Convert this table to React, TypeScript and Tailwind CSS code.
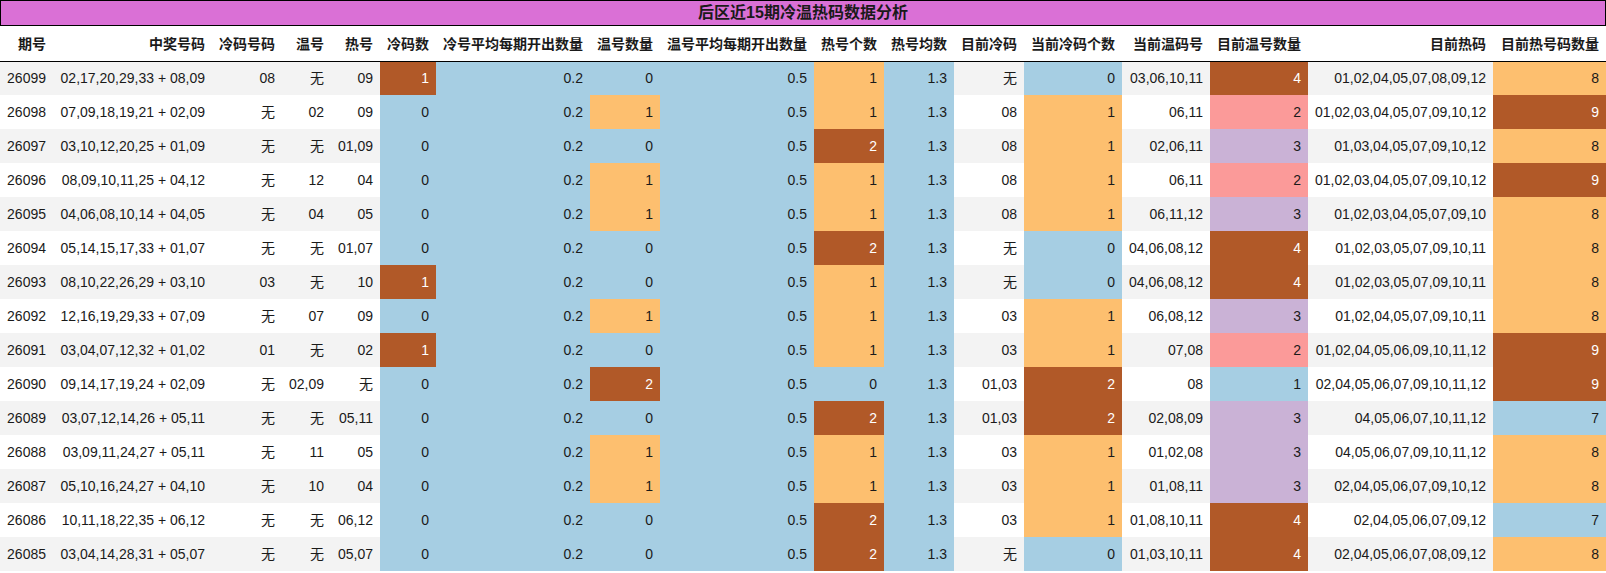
import React from 'react';

const BLUE = 'bg-[#a6cee3]';
const ORANGE = 'bg-[#fdbf6f]';
const BROWN = 'bg-[#b15928] text-white';
const PINK = 'bg-[#fb9a99]';
const LAV = 'bg-[#cab2d6]';

const scale3: Record<string, string> = { '0': BLUE, '1': ORANGE, '2': BROWN };
const coldScale: Record<string, string> = { '0': BLUE, '1': BROWN };
const warmNowScale: Record<string, string> = { '1': BLUE, '2': PINK, '3': LAV, '4': BROWN };
const hotNowScale: Record<string, string> = { '7': BLUE, '8': ORANGE, '9': BROWN };

const headers = [
  '期号', '中奖号码', '冷码号码', '温号', '热号', '冷码数', '冷号平均每期开出数量', '温号数量',
  '温号平均每期开出数量', '热号个数', '热号均数', '目前冷码', '当前冷码个数', '当前温码号',
  '目前温号数量', '目前热码', '目前热号码数量',
];

const widths = [
  'w-[53px]', 'w-[159px]', 'w-[70px]', 'w-[49px]', 'w-[49px]', 'w-[56px]', 'w-[154px]', 'w-[70px]',
  'w-[154px]', 'w-[70px]', 'w-[70px]', 'w-[70px]', 'w-[98px]', 'w-[88px]', 'w-[98px]', 'w-[185px]', 'w-[113px]',
];

// column index -> colour scale (others follow the row stripe)
const colScales: Record<number, Record<string, string> | string> = {
  5: coldScale,
  6: BLUE,
  7: scale3,
  8: BLUE,
  9: scale3,
  10: BLUE,
  12: scale3,
  14: warmNowScale,
  16: hotNowScale,
};

const rows: string[][] = [
  ['26099', '02,17,20,29,33 + 08,09', '08', '无', '09', '1', '0.2', '0', '0.5', '1', '1.3', '无', '0', '03,06,10,11', '4', '01,02,04,05,07,08,09,12', '8'],
  ['26098', '07,09,18,19,21 + 02,09', '无', '02', '09', '0', '0.2', '1', '0.5', '1', '1.3', '08', '1', '06,11', '2', '01,02,03,04,05,07,09,10,12', '9'],
  ['26097', '03,10,12,20,25 + 01,09', '无', '无', '01,09', '0', '0.2', '0', '0.5', '2', '1.3', '08', '1', '02,06,11', '3', '01,03,04,05,07,09,10,12', '8'],
  ['26096', '08,09,10,11,25 + 04,12', '无', '12', '04', '0', '0.2', '1', '0.5', '1', '1.3', '08', '1', '06,11', '2', '01,02,03,04,05,07,09,10,12', '9'],
  ['26095', '04,06,08,10,14 + 04,05', '无', '04', '05', '0', '0.2', '1', '0.5', '1', '1.3', '08', '1', '06,11,12', '3', '01,02,03,04,05,07,09,10', '8'],
  ['26094', '05,14,15,17,33 + 01,07', '无', '无', '01,07', '0', '0.2', '0', '0.5', '2', '1.3', '无', '0', '04,06,08,12', '4', '01,02,03,05,07,09,10,11', '8'],
  ['26093', '08,10,22,26,29 + 03,10', '03', '无', '10', '1', '0.2', '0', '0.5', '1', '1.3', '无', '0', '04,06,08,12', '4', '01,02,03,05,07,09,10,11', '8'],
  ['26092', '12,16,19,29,33 + 07,09', '无', '07', '09', '0', '0.2', '1', '0.5', '1', '1.3', '03', '1', '06,08,12', '3', '01,02,04,05,07,09,10,11', '8'],
  ['26091', '03,04,07,12,32 + 01,02', '01', '无', '02', '1', '0.2', '0', '0.5', '1', '1.3', '03', '1', '07,08', '2', '01,02,04,05,06,09,10,11,12', '9'],
  ['26090', '09,14,17,19,24 + 02,09', '无', '02,09', '无', '0', '0.2', '2', '0.5', '0', '1.3', '01,03', '2', '08', '1', '02,04,05,06,07,09,10,11,12', '9'],
  ['26089', '03,07,12,14,26 + 05,11', '无', '无', '05,11', '0', '0.2', '0', '0.5', '2', '1.3', '01,03', '2', '02,08,09', '3', '04,05,06,07,10,11,12', '7'],
  ['26088', '03,09,11,24,27 + 05,11', '无', '11', '05', '0', '0.2', '1', '0.5', '1', '1.3', '03', '1', '01,02,08', '3', '04,05,06,07,09,10,11,12', '8'],
  ['26087', '05,10,16,24,27 + 04,10', '无', '10', '04', '0', '0.2', '1', '0.5', '1', '1.3', '03', '1', '01,08,11', '3', '02,04,05,06,07,09,10,12', '8'],
  ['26086', '10,11,18,22,35 + 06,12', '无', '无', '06,12', '0', '0.2', '0', '0.5', '2', '1.3', '03', '1', '01,08,10,11', '4', '02,04,05,06,07,09,12', '7'],
  ['26085', '03,04,14,28,31 + 05,07', '无', '无', '05,07', '0', '0.2', '0', '0.5', '2', '1.3', '无', '0', '01,03,10,11', '4', '02,04,05,06,07,08,09,12', '8'],
];

function cellColor(col: number, value: string) {
  const s = colScales[col];
  if (!s) return '';
  if (typeof s === 'string') return s;
  return s[value] ?? '';
}

export default function App() {
  return (
    <div className="w-[1606px] bg-white text-[14px] text-[#1a1a1a] font-['Liberation_Sans','Noto_Sans_CJK_SC',sans-serif]">
      {/* Title bar */}
      <div className="h-[26px] border border-black bg-[#da70d6] flex items-center justify-center">
        <span className="text-[16px] font-bold leading-none text-[#1a1a1a]">后区近15期冷温热码数据分析</span>
      </div>

      <table className="table-fixed border-collapse w-[1606px]">
        <colgroup>
          {widths.map((w, i) => (
            <col key={i} className={w} />
          ))}
        </colgroup>
        <thead>
          <tr className="h-[35px] border-b border-black">
            {headers.map((h) => (
              <th key={h} className="px-[7px] pt-[2px] text-right font-bold whitespace-nowrap align-middle">
                {h}
              </th>
            ))}
          </tr>
        </thead>
        <tbody>
          {rows.map((r, ri) => (
            <tr key={r[0]} className={`h-[34px] ${ri % 2 === 0 ? 'bg-[#f3f3f3]' : 'bg-white'}`}>
              {r.map((v, ci) => (
                <td key={ci} className={`px-[7px] p-0 text-right whitespace-nowrap align-middle ${cellColor(ci, v)}`}>
                  {v}
                </td>
              ))}
            </tr>
          ))}
        </tbody>
      </table>
    </div>
  );
}
